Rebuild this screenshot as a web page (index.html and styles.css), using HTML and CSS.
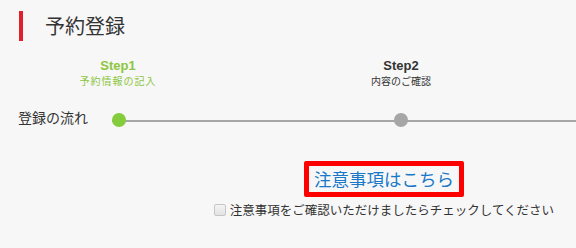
FILE: index.html
```html
<!DOCTYPE html>
<html lang="ja">
<head>
<meta charset="utf-8">
<link rel="stylesheet" href="styles.css">
</head>
<body>
<div class="page">
  <h1 class="title">予約登録</h1>
  <div class="steps">
    <div class="step step-active">
      <div class="step-name">Step1</div>
      <div class="step-sub step-sub-spaced">予約情報の記入</div>
    </div>
    <div class="step">
      <div class="step-name">Step2</div>
      <div class="step-sub">内容のご確認</div>
    </div>
  </div>
  <div class="flow">
    <div class="flow-label">登録の流れ</div>
    <div class="track">
      <span class="dot dot-active"></span>
      <span class="dot"></span>
    </div>
  </div>
  <div class="notice">
    <a class="notice-link" href="#">注意事項はこちら</a>
    <label class="agree"><input type="checkbox" class="agree-box"><span>注意事項をご確認いただけましたらチェックしてください</span></label>
  </div>
</div>
</body>
</html>
```
FILE: styles.css
```css
html, body {
  margin: 0;
  padding: 0;
  background: #f7f7f7;
  overflow: hidden;
}
body {
  width: 576px;
  height: 248px;
  font-family: "Noto Sans CJK JP", "Liberation Sans", sans-serif;
  color: #333;
}
.page {
  width: 768px;
  padding-top: 11px;
}
.title {
  margin: 0 0 0 19px;
  height: 30px;
  border-left: 4px solid #e0202a;
  padding-left: 22px;
  font-size: 20px;
  font-weight: normal;
  line-height: 30px;
  color: #333;
}
.steps {
  display: flex;
  gap: 143px;
  margin-left: 48px;
  margin-top: 18px;
}
.step {
  width: 140px;
  text-align: center;
  color: #333;
}
.step-active {
  color: #8cc63e;
}
.step-name {
  font-family: "Liberation Sans", Arial, sans-serif;
  font-weight: bold;
  font-size: 13px;
  line-height: 14px;
}
.step-sub {
  font-size: 10px;
  line-height: 12px;
  margin-top: 2px;
}
.step-sub-spaced {
  letter-spacing: 1px;
}
.flow {
  display: flex;
  align-items: center;
  margin-top: 23px;
  height: 20px;
}
.flow-label {
  margin-left: 18px;
  width: 94px;
  font-size: 14px;
  line-height: 20px;
  margin-top: -6px;
}
.track {
  flex: 1;
  display: flex;
  align-items: center;
  gap: 268px;
  height: 14px;
  background: linear-gradient(#a6a6a6, #a6a6a6) no-repeat 0 7px / 100% 2px;
}
.dot {
  width: 14px;
  height: 14px;
  border-radius: 50%;
  background: #a6a6a6;
}
.dot-active {
  background: #84cc3c;
}
.notice {
  display: flex;
  flex-direction: column;
  align-items: center;
  margin-top: 31px;
}
.notice-link {
  display: block;
  border: 5px solid #ff0000;
  border-radius: 2px;
  padding: 0 5px;
  height: 26px;
  line-height: 26px;
  font-size: 17.5px;
  color: #1a78c8;
  text-decoration: none;
}
.agree {
  display: flex;
  align-items: center;
  gap: 4px;
  margin-top: 5px;
  font-size: 12.5px;
  line-height: 16px;
  color: #333;
}
.agree-box {
  appearance: none;
  -webkit-appearance: none;
  margin: 0;
  width: 12px;
  height: 12px;
  border: 1px solid #c6c6c6;
  border-radius: 2px;
  background: linear-gradient(#f4f4f4, #e2e2e2);
}
```
